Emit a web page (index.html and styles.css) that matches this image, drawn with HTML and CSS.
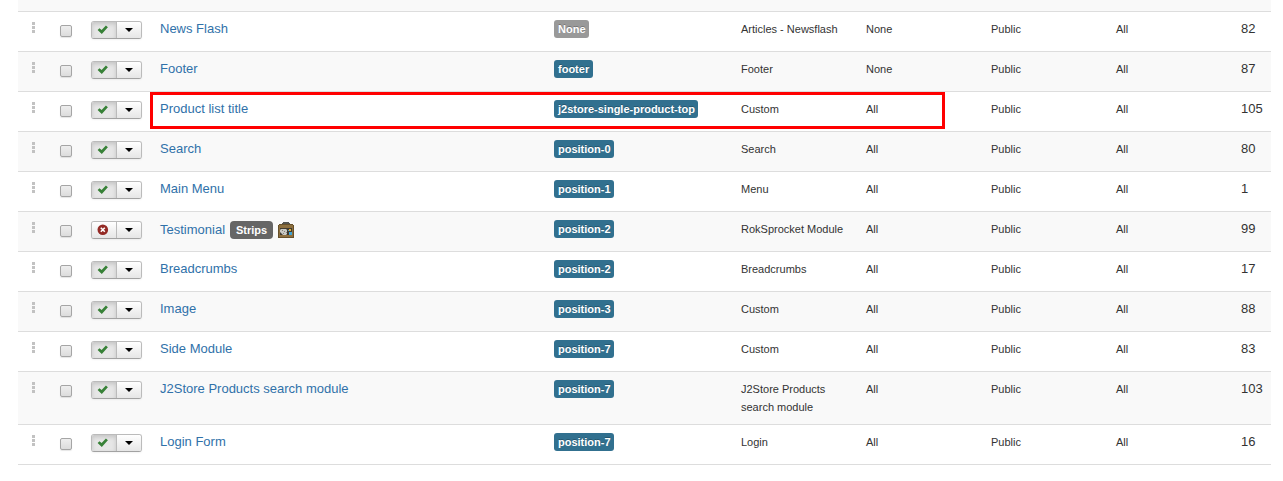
FILE: index.html
```html
<!DOCTYPE html>
<html lang="en">
<head>
<meta charset="utf-8">
<title>Modules</title>
<link rel="stylesheet" href="styles.css">
</head>
<body>
<svg class="defs" width="0" height="0">
  <symbol id="drag" viewBox="0 0 3 11"><path fill="#c2c2c2" d="M0 0h3v3H0zM0 4h3v3H0zM0 8h3v3H0z"/></symbol>
  <symbol id="check" viewBox="0 0 12 12"><path fill="#378137" d="M.6 6.100 2.500 4.200 4.600 6.100 8.900 1.500 10.900 3.300 4.800 10z"/></symbol>
  <symbol id="cross" viewBox="0 0 12 12"><circle cx="5.800" cy="5.700" r="5.300" fill="#942a25"/><path stroke="#fff" stroke-width="1.600" d="M3.800 3.700l4 4M7.800 3.700l-4 4"/></symbol>
  <symbol id="caret" viewBox="0 0 8 4"><path fill="#000" d="M0 0h8L4 4z"/></symbol>
  <symbol id="case" viewBox="0 0 16 16">
    <path fill="#55544f" d="M5 0h6v1h1v2H4V1h1z"/>
    <path fill="#66502b" d="M1 2h14v1h1v13H0V3h1z"/>
    <path fill="#8d6f3e" d="M1 3h14v3H1zM1 13h14v2H1zM1 6h1v7H1zM14 6h1v7h-1z"/>
    <path fill="#403a30" d="M2 6h12v7H2z"/>
    <path fill="#c9c9c4" d="M3 7h5l1 1v4l-1 1H5L2 10V8z"/>
    <path fill="#85827b" d="M4 8h1v1H4zM6 9h1v1H6zM5 11h1v1H5zM8 10h1v1H8z"/>
    <path fill="#e3af35" d="M11 7h2v2h-2z"/><path fill="#3da3d6" d="M11 10h3v3h-3zM10 8h1v1h-1z"/>
  </symbol>
</svg>
<main class="module-list">
  <div class="row row-clipped"></div>
  <div id="rows"></div>
  <div class="highlight"></div>
</main>
<script src="rows.js"></script>
</body>
</html>
```
FILE: styles.css
```css
body {
  margin: 0;
  background: #fff;
  color: #333;
  font: 13px/18px "Liberation Sans", Arial, sans-serif;
}
.defs { position: absolute; }
.module-list {
  position: relative;
  margin: 0 12px 0 18px;
}
#rows { border-bottom: 1px solid #ddd; }
.row {
  display: grid;
  grid-template-columns: 28px 31px 69px 394px 187px 125px 125px 125px 125px 30px;
  align-items: start;
  padding: 8px 0 12px 14px;
  border-top: 1px solid #ddd;
}
#rows .row:nth-child(even) { background: #f9f9f9; }
#rows .row-tall { padding-bottom: 8px; }
.row-clipped {
  height: 11px;
  padding: 0;
  border: 0;
  background: #f9f9f9;
}
.drag { width: 3px; height: 11px; margin-top: 2px; }
.checkbox {
  appearance: none;
  box-sizing: border-box;
  width: 12px;
  height: 12px;
  margin: 5px 0 0;
  border: 1px solid #a5a5a5;
  border-radius: 2px;
  background: linear-gradient(#eee, #dcdcdc);
  box-shadow: 0 1px 1px rgba(0, 0, 0, .1);
}
.btn-group {
  display: flex;
  box-sizing: border-box;
  width: 51px;
  height: 18px;
  margin-top: 1px;
  border: 1px solid #bbb;
  border-bottom-color: #a2a2a2;
  border-radius: 3px;
  overflow: hidden;
  box-shadow: 0 1px 2px rgba(0, 0, 0, .05);
}
.btn {
  display: flex;
  align-items: center;
  justify-content: center;
  box-sizing: border-box;
  width: 24px;
  background: linear-gradient(#fff, #e6e6e6);
}
.btn + .btn { width: 25px; border-left: 1px solid #bbb; }
.btn-active {
  background: #e6e6e6;
  box-shadow: inset 0 2px 4px rgba(0, 0, 0, .15);
}
.state { width: 12px; height: 12px; margin: 0 2px 0 0; }
.caret { width: 8px; height: 4px; }
.title { display: flex; align-items: center; }
.title-extra { padding-top: 1px; }
.link { color: #3071a9; text-decoration: none; }
.badge {
  justify-self: start;
  padding: 0 3.6px 0 4px;
  border-radius: 3px;
  background: #31708f;
  color: #fff;
  font-size: 11px;
  font-weight: bold;
  text-shadow: 0 -1px 0 rgba(0, 0, 0, .25);
  white-space: nowrap;
}
.badge-none { background: #999; }
.strips {
  margin: 0 5px;
  padding: 0 6px;
  border-radius: 4px;
  background: #666;
  color: #fff;
  font-size: 11px;
  font-weight: bold;
}
.case { width: 16px; height: 16px; }
.small { font-size: 11px; }
.type { width: 109px; }
.highlight {
  position: absolute;
  top: 92px;
  left: 132px;
  box-sizing: border-box;
  width: 795px;
  height: 37px;
  border: 3px solid #f00;
}
```
FILE: rows.js
```js
const modules = [
  ["News Flash", "None", "Articles - Newsflash", "None", 82],
  ["Footer", "footer", "Footer", "None", 87],
  ["Product list title", "j2store-single-product-top", "Custom", "All", 105],
  ["Search", "position-0", "Search", "All", 80],
  ["Main Menu", "position-1", "Menu", "All", 1],
  ["Testimonial", "position-2", "RokSprocket Module", "All", 99],
  ["Breadcrumbs", "position-2", "Breadcrumbs", "All", 17],
  ["Image", "position-3", "Custom", "All", 88],
  ["Side Module", "position-7", "Custom", "All", 83],
  ["J2Store Products search module", "position-7", "J2Store Products search module", "All", 103],
  ["Login Form", "position-7", "Login", "All", 16]
];
const icon = (cls, id) => `<svg class="${cls}"><use href="#${id}"/></svg>`;

document.getElementById("rows").innerHTML = modules.map(([title, position, type, pages, id]) => {
  const off = title === "Testimonial";
  const extra = off ? `<span class="strips">Strips</span>${icon("case", "case")}` : "";
  return `<div class="row${type.length > 20 ? " row-tall" : ""}">
    ${icon("drag", "drag")}
    <input class="checkbox" type="checkbox" aria-label="${title}">
    <div class="btn-group"><span class="btn${off ? "" : " btn-active"}">${icon("state", off ? "cross" : "check")}</span><span class="btn">${icon("caret", "caret")}</span></div>
    <div class="title${off ? " title-extra" : ""}"><a class="link" href="#">${title}</a>${extra}</div>
    <span class="badge${position === "None" ? " badge-none" : ""}">${position}</span>
    <span class="small type">${type}</span>
    <span class="small">${pages}</span>
    <span class="small">Public</span>
    <span class="small">All</span>
    <span>${id}</span>
  </div>`;
}).join("");
```
